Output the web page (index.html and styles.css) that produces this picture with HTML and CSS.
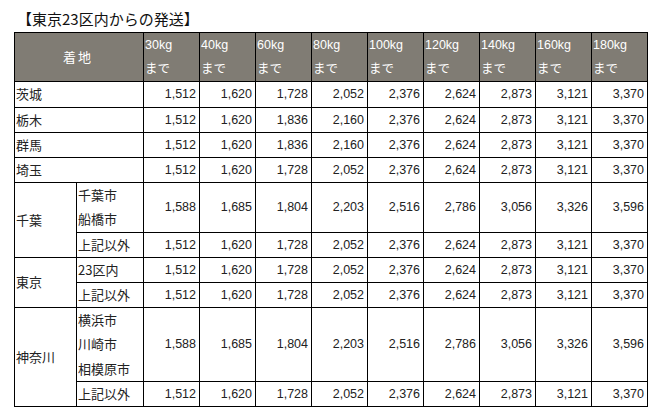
FILE: index.html
```html
<!DOCTYPE html>
<html lang="ja">
<head>
<meta charset="utf-8">
<link rel="stylesheet" href="styles.css">
</head>
<body>
<div class="title">【東京23区内からの発送】</div>
<table class="rates">
<colgroup>
<col class="c-pref"><col class="c-city">
<col class="c-num"><col class="c-num"><col class="c-num"><col class="c-num"><col class="c-num"><col class="c-num"><col class="c-num"><col class="c-num"><col class="c-num">
</colgroup>
<thead>
<tr>
<th colspan="2" class="dest">着地</th>
<th>30kg<br>まで</th><th>40kg<br>まで</th><th>60kg<br>まで</th><th>80kg<br>まで</th><th>100kg<br>まで</th><th>120kg<br>まで</th><th>140kg<br>まで</th><th>160kg<br>まで</th><th>180kg<br>まで</th>
</tr>
</thead>
<tbody>
<tr><td colspan="2" class="lbl">茨城</td><td>1,512</td><td>1,620</td><td>1,728</td><td>2,052</td><td>2,376</td><td>2,624</td><td>2,873</td><td>3,121</td><td>3,370</td></tr>
<tr><td colspan="2" class="lbl">栃木</td><td>1,512</td><td>1,620</td><td>1,836</td><td>2,160</td><td>2,376</td><td>2,624</td><td>2,873</td><td>3,121</td><td>3,370</td></tr>
<tr><td colspan="2" class="lbl">群馬</td><td>1,512</td><td>1,620</td><td>1,836</td><td>2,160</td><td>2,376</td><td>2,624</td><td>2,873</td><td>3,121</td><td>3,370</td></tr>
<tr><td colspan="2" class="lbl">埼玉</td><td>1,512</td><td>1,620</td><td>1,728</td><td>2,052</td><td>2,376</td><td>2,624</td><td>2,873</td><td>3,121</td><td>3,370</td></tr>
<tr><td rowspan="2" class="lbl">千葉</td><td class="lbl">千葉市<br>船橋市</td><td>1,588</td><td>1,685</td><td>1,804</td><td>2,203</td><td>2,516</td><td>2,786</td><td>3,056</td><td>3,326</td><td>3,596</td></tr>
<tr><td class="lbl">上記以外</td><td>1,512</td><td>1,620</td><td>1,728</td><td>2,052</td><td>2,376</td><td>2,624</td><td>2,873</td><td>3,121</td><td>3,370</td></tr>
<tr><td rowspan="2" class="lbl">東京</td><td class="lbl">23区内</td><td>1,512</td><td>1,620</td><td>1,728</td><td>2,052</td><td>2,376</td><td>2,624</td><td>2,873</td><td>3,121</td><td>3,370</td></tr>
<tr><td class="lbl">上記以外</td><td>1,512</td><td>1,620</td><td>1,728</td><td>2,052</td><td>2,376</td><td>2,624</td><td>2,873</td><td>3,121</td><td>3,370</td></tr>
<tr><td rowspan="2" class="lbl">神奈川</td><td class="lbl">横浜市<br>川崎市<br>相模原市</td><td>1,588</td><td>1,685</td><td>1,804</td><td>2,203</td><td>2,516</td><td>2,786</td><td>3,056</td><td>3,326</td><td>3,596</td></tr>
<tr><td class="lbl">上記以外</td><td>1,512</td><td>1,620</td><td>1,728</td><td>2,052</td><td>2,376</td><td>2,624</td><td>2,873</td><td>3,121</td><td>3,370</td></tr>
</tbody>
</table>
</body>
</html>
```

FILE: styles.css
```css
html, body {
  margin: 0;
  padding: 0;
  background: #fff;
}
body {
  font-family: "Liberation Sans", Arial, "Noto Sans CJK JP", sans-serif;
  color: #222;
}
.title {
  font-family: "Noto Sans CJK JP", sans-serif;
  font-size: 15px;
  line-height: 20px;
  padding: 9px 0 0 17px;
  height: 23px;
  color: #111;
}
.rates {
  margin-left: 14px;
  border-collapse: collapse;
  table-layout: fixed;
  width: 634px;
  font-size: 12.5px;
}
.c-pref { width: 62px; }
.c-city { width: 67px; }
.c-num { width: 56px; }
.rates th, .rates td {
  border: 1px solid #000;
  line-height: 24.2px;
  padding: 0 3px 0 1px;
  vertical-align: middle;
  white-space: nowrap;
  overflow: hidden;
}
.rates th {
  background: #807c74;
  color: #fff;
  font-weight: normal;
  text-align: left;
}
.rates th.dest {
  text-align: center;
  font-family: "Noto Sans CJK JP", sans-serif;
  font-size: 13px;
  letter-spacing: 2px;
}
.rates td {
  text-align: right;
}
.rates td.lbl {
  text-align: left;
  font-family: "Noto Sans CJK JP", sans-serif;
  font-size: 13px;
}
```
